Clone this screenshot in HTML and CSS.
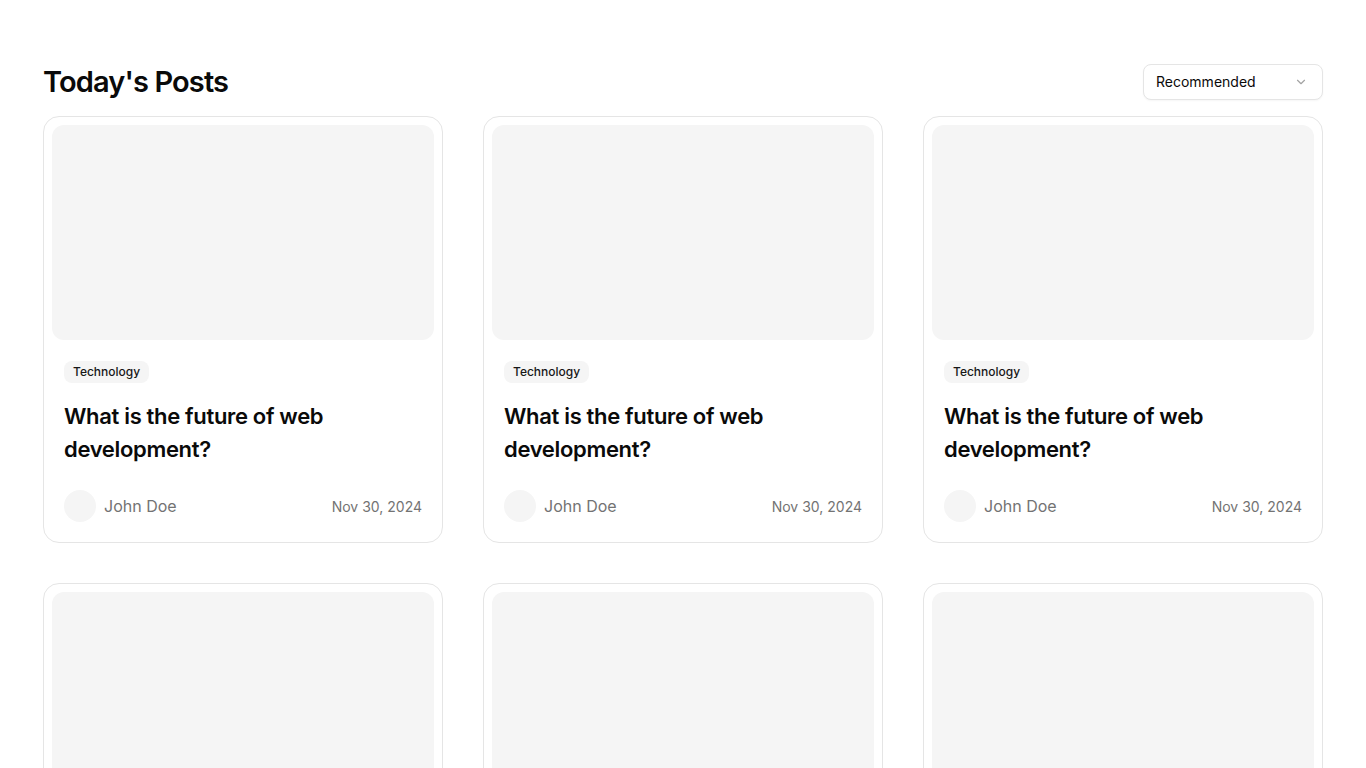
FILE: index.html
```html
<!DOCTYPE html>
<html lang="en">
<head>
<meta charset="utf-8">
<title>Today's Posts</title>
<link rel="stylesheet" href="styles.css">
</head>
<body>
<main class="page">
  <header class="page-head">
    <h1 class="page-title">Today's Posts</h1>
    <button class="select" type="button">
      <span>Recommended</span>
      <svg class="chev" width="14" height="14" viewBox="0 0 24 24" fill="none" stroke="currentColor" stroke-width="2" stroke-linecap="round" stroke-linejoin="round"><path d="m6 9 6 6 6-6"/></svg>
    </button>
  </header>
  <section class="grid">
    <article class="card">
      <div class="thumb"></div>
      <div class="body">
        <span class="badge">Technology</span>
        <h2 class="title">What is the future of web development?</h2>
        <div class="meta">
          <div class="author"><span class="avatar"></span><span class="name">John Doe</span></div>
          <span class="date">Nov 30, 2024</span>
        </div>
      </div>
    </article>
    <article class="card">
      <div class="thumb"></div>
      <div class="body">
        <span class="badge">Technology</span>
        <h2 class="title">What is the future of web development?</h2>
        <div class="meta">
          <div class="author"><span class="avatar"></span><span class="name">John Doe</span></div>
          <span class="date">Nov 30, 2024</span>
        </div>
      </div>
    </article>
    <article class="card">
      <div class="thumb"></div>
      <div class="body">
        <span class="badge">Technology</span>
        <h2 class="title">What is the future of web development?</h2>
        <div class="meta">
          <div class="author"><span class="avatar"></span><span class="name">John Doe</span></div>
          <span class="date">Nov 30, 2024</span>
        </div>
      </div>
    </article>
    <article class="card">
      <div class="thumb"></div>
      <div class="body">
        <span class="badge">Technology</span>
        <h2 class="title">What is the future of web development?</h2>
        <div class="meta">
          <div class="author"><span class="avatar"></span><span class="name">John Doe</span></div>
          <span class="date">Nov 30, 2024</span>
        </div>
      </div>
    </article>
    <article class="card">
      <div class="thumb"></div>
      <div class="body">
        <span class="badge">Technology</span>
        <h2 class="title">What is the future of web development?</h2>
        <div class="meta">
          <div class="author"><span class="avatar"></span><span class="name">John Doe</span></div>
          <span class="date">Nov 30, 2024</span>
        </div>
      </div>
    </article>
    <article class="card">
      <div class="thumb"></div>
      <div class="body">
        <span class="badge">Technology</span>
        <h2 class="title">What is the future of web development?</h2>
        <div class="meta">
          <div class="author"><span class="avatar"></span><span class="name">John Doe</span></div>
          <span class="date">Nov 30, 2024</span>
        </div>
      </div>
    </article>
  </section>
</main>
</body>
</html>
```

FILE: styles.css
```css
* { box-sizing: border-box; }
html, body { margin: 0; padding: 0; background: #fff; }
body {
  font-family: Inter, "Liberation Sans", sans-serif;
  color: #0a0a0a;
}
.page {
  max-width: 1280px;
  margin: 0 auto;
  padding-top: 64px;
}
.page-head {
  display: flex;
  align-items: center;
  justify-content: space-between;
  margin-bottom: 16px;
}
.page-title {
  margin: 0;
  font-size: 29px;
  line-height: 36px;
  font-weight: 600;
  letter-spacing: -0.03em;
}
.select {
  width: 180px;
  height: 36px;
  display: flex;
  align-items: center;
  justify-content: space-between;
  padding: 0 14px 0 12px;
  border: 1px solid #e5e5e5;
  border-radius: 8px;
  background: #fff;
  font-family: inherit;
  font-size: 14px;
  line-height: 20px;
  color: #0a0a0a;
  box-shadow: 0 1px 2px rgba(0,0,0,0.04);
}
.select span { margin-top: -1px; }
.chev { color: #a3a3a3; }
.grid {
  display: grid;
  grid-template-columns: repeat(3, 400px);
  column-gap: 40px;
  row-gap: 40px;
}
.card {
  border: 1px solid #e5e5e5;
  border-radius: 16px;
  padding: 8px;
  background: #fff;
}
.thumb {
  height: 215px;
  border-radius: 12px;
  background: #f5f5f5;
}
.body {
  padding: 21px 12px 12px;
  display: flex;
  flex-direction: column;
  align-items: flex-start;
}
.badge {
  display: inline-block;
  height: 22px;
  line-height: 22px;
  padding: 0 9px;
  border-radius: 8px;
  background: #f5f5f5;
  font-size: 12px;
  font-weight: 500;
  color: #171717;
}
.title {
  margin: 17px 0 0;
  font-size: 22px;
  line-height: 33px;
  font-weight: 600;
  letter-spacing: -0.015em;
  color: #0a0a0a;
  max-width: 300px;
}
.meta {
  margin-top: 24px;
  width: 100%;
  display: flex;
  align-items: center;
  justify-content: space-between;
}
.author { display: flex; align-items: center; gap: 8px; }
.avatar {
  width: 32px;
  height: 32px;
  border-radius: 50%;
  background: #f5f5f5;
}
.name { font-size: 16px; color: #737373; font-weight: 400; }
.date { font-size: 14px; color: #737373; }
```
